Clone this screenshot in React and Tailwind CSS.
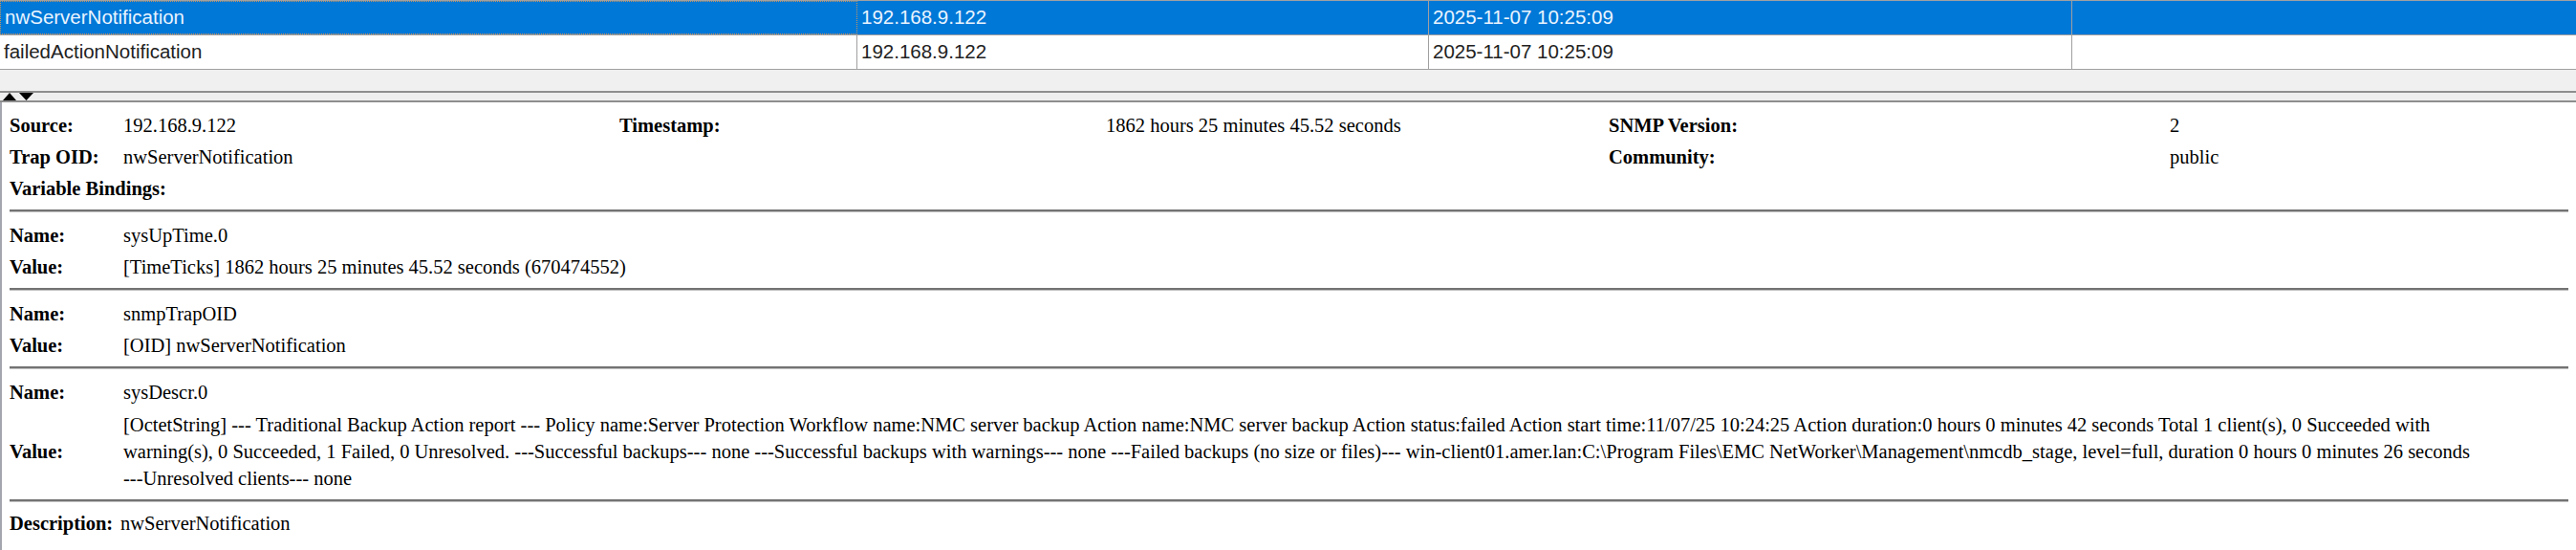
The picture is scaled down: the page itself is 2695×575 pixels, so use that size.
import React from 'react'

const COLS = 'grid-cols-[897px_598px_673px_1fr]'

const TRAPS = [
  { name: 'nwServerNotification', source: '192.168.9.122', time: '2025-11-07 10:25:09', selected: true },
  { name: 'failedActionNotification', source: '192.168.9.122', time: '2025-11-07 10:25:09', selected: false },
]

const BINDINGS = [
  { name: 'sysUpTime.0', value: ['[TimeTicks] 1862 hours 25 minutes 45.52 seconds (670474552)'] },
  { name: 'snmpTrapOID', value: ['[OID] nwServerNotification'] },
  {
    name: 'sysDescr.0',
    value: [
      '[OctetString] --- Traditional Backup Action report --- Policy name:Server Protection Workflow name:NMC server backup Action name:NMC server backup Action status:failed Action start time:11/07/25 10:24:25 Action duration:0 hours 0 minutes 42 seconds Total 1 client(s), 0 Succeeded with',
      'warning(s), 0 Succeeded, 1 Failed, 0 Unresolved. ---Successful backups--- none ---Successful backups with warnings--- none ---Failed backups (no size or files)--- win-client01.amer.lan:C:\\Program Files\\EMC NetWorker\\Management\\nmcdb_stage, level=full, duration 0 hours 0 minutes 26 seconds',
      '---Unresolved clients--- none',
    ],
  },
]

function TrapRow({ trap }) {
  const cell = 'h-full flex items-center pl-[4px] whitespace-nowrap overflow-hidden border-r border-[#a0a0a0]'
  return (
    <div
      className={`grid ${COLS} h-[36px] border-b border-[#a0a0a0] ${
        trap.selected ? 'bg-[#0078d7] text-[#eaf4ff]' : 'bg-white text-[#222]'
      }`}
    >
      <div className={`${cell} pl-[2px] ${trap.selected ? 'border border-dotted border-[#c8955e]' : ''}`}>{trap.name}</div>
      <div className={cell}>{trap.source}</div>
      <div className={cell}>{trap.time}</div>
      <div className="h-full" />
    </div>
  )
}

function Hr({ last }) {
  return (
    <div
      className={`mt-[5px] ${last ? 'mb-[6px]' : 'mb-[8px]'} border-t-2 border-b border-t-[#737373] border-b-[#c0c0c0]`}
    />
  )
}

// one table cell, the 3px padding stands in for Swing's cellpadding
function Cell({ bold, className = '', children }) {
  return (
    <div className={`py-[3px] whitespace-nowrap ${bold ? 'font-bold' : ''} ${className}`}>{children}</div>
  )
}

export default function App() {
  return (
    <div className="w-[2695px] h-[575px] overflow-hidden bg-white">
      {/* trap list */}
      <div
        className="border-t border-[#a0a0a0] text-[20.5px]"
        style={{ fontFamily: '"Liberation Sans", Arial, sans-serif' }}
      >
        {TRAPS.map(t => <TrapRow key={t.name} trap={t} />)}
        <div className="h-[24px] bg-[#f0f0f0] border-b-2 border-[#8e8e8e]" />
        <div className="h-[10px] bg-[#eeeeee] border-b-2 border-[#8e8e8e] flex items-start pl-[3px] gap-[3px]">
          <svg width="14" height="8" viewBox="0 0 14 8"><polygon points="7,0 14,8 0,8" fill="#000" /></svg>
          <svg width="15" height="8" viewBox="0 0 15 8"><polygon points="0,0 15,0 7.5,8" fill="#000" /></svg>
        </div>
      </div>

      {/* trap details */}
      <div
        className="border-l-2 border-[#a3a6ae] h-full pt-[8px] px-[8px] text-[20.5px] leading-[27px] text-black"
        style={{ fontFamily: '"Liberation Serif", "Times New Roman", serif' }}
      >
        <div className="grid grid-cols-[119px_519px_509px_526px_587px_1fr]">
          <Cell bold>Source:</Cell>
          <Cell>192.168.9.122</Cell>
          <Cell bold>Timestamp:</Cell>
          <Cell>1862 hours 25 minutes 45.52 seconds</Cell>
          <Cell bold>SNMP Version:</Cell>
          <Cell>2</Cell>

          <Cell bold>Trap OID:</Cell>
          <Cell>nwServerNotification</Cell>
          <Cell />
          <Cell />
          <Cell bold>Community:</Cell>
          <Cell>public</Cell>

          <Cell bold className="col-span-6">Variable Bindings:</Cell>
        </div>

        {BINDINGS.map(b => (
          <div key={b.name}>
            <Hr />
            <div className="grid grid-cols-[119px_1fr]">
              <Cell bold>Name:</Cell>
              <Cell>{b.name}</Cell>
              <Cell bold className="self-center">Value:</Cell>
              <Cell className={`overflow-hidden ${b.value.length > 1 ? 'leading-[28px]' : ''}`}>
                {b.value.map((line, i) => <div key={i}>{line}</div>)}
              </Cell>
            </div>
          </div>
        ))}

        <Hr last />
        <div className="flex py-[3px] whitespace-nowrap">
          <div className="w-[116px] font-bold">Description:</div>
          <div>nwServerNotification</div>
        </div>
      </div>
    </div>
  )
}
